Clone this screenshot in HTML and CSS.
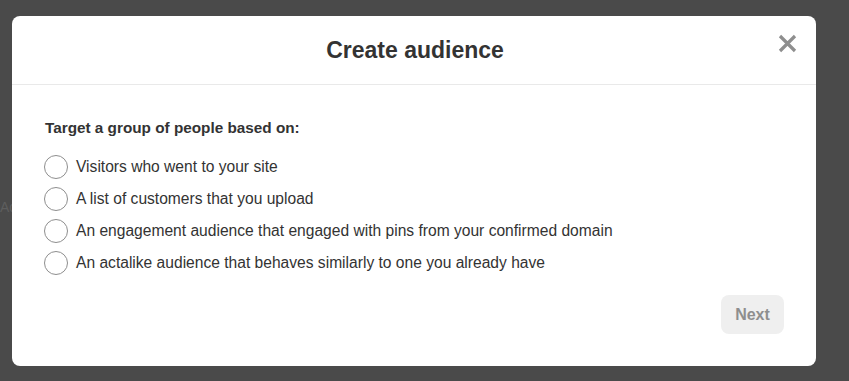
FILE: index.html
```html
<!DOCTYPE html>
<html lang="en">
<head>
  <meta charset="UTF-8">
  <title>Create audience</title>
  <link rel="stylesheet" href="styles.css">
</head>
<body>
  <div class="page">
    <span class="page-label">Ad</span>
  </div>

  <div class="modal">
    <header class="modal-header">
      <h1 class="modal-title">Create audience</h1>
      <button class="close-btn" aria-label="Close">
        <svg width="19" height="19" viewBox="0 0 19 19">
          <path d="M2 2 L17 17 M17 2 L2 17" stroke="#8e8e8e" stroke-width="3.2" stroke-linecap="butt"/>
        </svg>
      </button>
    </header>

    <div class="modal-body">
      <p class="prompt">Target a group of people based on:</p>
      <ul class="options">
        <li class="option"><span class="radio"></span>Visitors who went to your site</li>
        <li class="option"><span class="radio"></span>A list of customers that you upload</li>
        <li class="option"><span class="radio"></span>An engagement audience that engaged with pins from your confirmed domain</li>
        <li class="option"><span class="radio"></span>An actalike audience that behaves similarly to one you already have</li>
      </ul>
    </div>

    <footer class="modal-footer">
      <button class="btn-next" disabled>Next</button>
    </footer>
  </div>
</body>
</html>
```

FILE: styles.css
```css
:root {
  --overlay: #4a4a4a;
  --surface: #ffffff;
  --text: #333333;
  --muted: #8e8e8e;
  --line: #e9e9e9;
}

body {
  margin: 0;
  background: var(--overlay);
  font-family: "Liberation Sans", Arial, sans-serif;
  color: var(--text);
  height: 381px;
  overflow: hidden;
}

.page {
  padding-top: 199px;
}

.page-label {
  display: block;
  font-size: 14px;
  color: #5e5e5e;
}

.modal {
  position: absolute;
  top: 16px;
  left: 12px;
  width: 804px;
  height: 350px;
  background: var(--surface);
  border-radius: 8px;
  display: flex;
  flex-direction: column;
}

.modal-header {
  position: relative;
  height: 68px;
  border-bottom: 1px solid var(--line);
  display: flex;
  align-items: center;
  justify-content: center;
}

.modal-title {
  margin: 0 0 0 2px;
  font-size: 23px;
  font-weight: 700;
  color: var(--text);
}

.close-btn {
  position: absolute;
  top: 18px;
  right: 19px;
  padding: 0;
  border: none;
  background: none;
  line-height: 0;
  cursor: pointer;
}

.modal-body {
  flex: 1;
  padding: 32px 32px 0;
}

.prompt {
  margin: 0 0 13px 1px;
  font-size: 15.3px;
  font-weight: 700;
  line-height: 21px;
}

.options {
  list-style: none;
  margin: 0;
  padding: 0;
}

.option {
  display: flex;
  align-items: center;
  gap: 8px;
  height: 32px;
  font-size: 15.6px;
}

.radio {
  width: 22px;
  height: 22px;
  border: 1px solid var(--muted);
  border-radius: 50%;
  flex-shrink: 0;
}

.modal-footer {
  display: flex;
  justify-content: flex-end;
  padding: 0 32px 32px;
}

.btn-next {
  width: 63px;
  height: 39px;
  border: none;
  border-radius: 8px;
  background: #efefef;
  color: var(--muted);
  font-family: inherit;
  font-size: 16px;
  font-weight: 700;
}
```
